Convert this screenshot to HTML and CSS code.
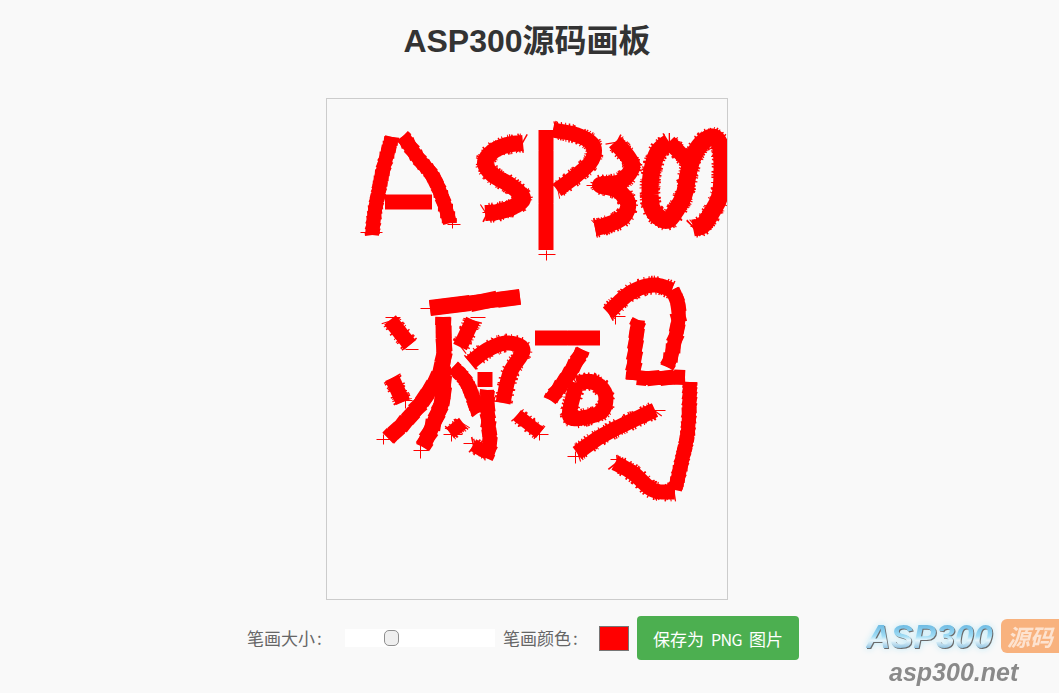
FILE: index.html
```html
<!DOCTYPE html>
<html lang="zh-CN">
<head>
<meta charset="utf-8">
<title>ASP300源码画板</title>
<link rel="stylesheet" href="styles.css">
</head>
<body>
<main class="app">
  <h1 class="title">ASP300源码画板</h1>
  <canvas id="board" class="board" width="400" height="500"></canvas>
  <div class="controls">
    <label class="label label-size" for="size">笔画大小<span class="colon">:</span></label>
    <input class="slider" id="size" type="range" min="1" max="50" value="15">
    <label class="label label-color" for="color">笔画颜色<span class="colon">:</span></label>
    <input class="swatch" id="color" type="color" value="#ff0000">
    <button class="save" type="button">保存为 <span class="save-latin">PNG</span> 图片</button>
  </div>
</main>
<div class="logo">
  <div class="logo-top">
    <span class="logo-name">ASP300</span>
    <span class="logo-badge">源码</span>
  </div>
  <div class="logo-url">asp300.net</div>
</div>
<script src="app.js"></script>
</body>
</html>
```
FILE: styles.css
```css
* { box-sizing: border-box; }
html, body { margin: 0; height: 100%; }
body {
  background: #f9f9f9;
  color: #666;
  font-family: "Liberation Sans", "Noto Sans CJK SC", sans-serif;
  overflow: hidden;
}
.app { width: 1054px; }
.title {
  margin: 22px 0 38px;
  font-size: 32px;
  line-height: 38px;
  font-weight: 700;
  color: #333;
  text-align: center;
}
.board {
  display: block;
  box-sizing: content-box;
  margin: 0 auto;
  border: 1px solid #ccc;
}
.controls {
  display: flex;
  justify-content: center;
  align-items: center;
  margin-top: 16px;
}
.label {
  width: 80px;
  font-size: 17px;
  line-height: 24px;
  color: #666;
  font-family: "Noto Sans CJK SC", sans-serif;
  white-space: nowrap;
}
.colon { margin-left: 2px; }
.label-size { margin-right: 18px; }
.label-color { margin-right: 16px; }
.slider {
  -webkit-appearance: none;
  appearance: none;
  width: 150px;
  height: 18px;
  margin: 0 8px 0 0;
  background: #fff;
  outline: none;
}
.slider::-webkit-slider-thumb {
  -webkit-appearance: none;
  width: 15px;
  height: 16px;
  border: 1px solid #8f8f8f;
  border-radius: 5px;
  background: #efefef;
}
.swatch {
  -webkit-appearance: none;
  appearance: none;
  width: 30px;
  height: 25px;
  margin: 0 8px 0 0;
  padding: 0;
  border: 1px solid #767676;
  background: #f00;
}
.swatch::-webkit-color-swatch-wrapper { padding: 0; }
.swatch::-webkit-color-swatch { border: 0; }
.save {
  width: 162px;
  height: 44px;
  margin-right: 8px;
  padding: 0;
  border: 0;
  border-radius: 4px;
  background: #4caf50;
  color: #fff;
  font-family: "Noto Sans CJK SC", sans-serif;
  font-size: 17px;
  word-spacing: 3px;
  white-space: nowrap;
}
.save-latin { font-size: 16px; letter-spacing: -.5px; }
.logo {
  position: fixed;
  right: 0;
  bottom: 0;
  width: 193px;
  height: 75px;
}
.logo-top { display: flex; align-items: center; justify-content: space-between; height: 36px; }
.logo-name {
  font: italic 700 34px/36px "Liberation Sans", sans-serif;
  background: linear-gradient(180deg, #4fa6d8 0%, #9fdcf5 50%, #e8f6fb 62%, #4f9fd0 100%);
  -webkit-background-clip: text;
  background-clip: text;
  color: transparent;
  filter: drop-shadow(1.5px 1.5px 0 #6a6a6a) drop-shadow(0 0 3px #bfeaf8);
}
.logo-badge {
  width: 58px;
  height: 34px;
  border-radius: 6px 0 0 6px;
  background: #f8b27e;
  color: #fde3d0;
  font: italic 700 23px/34px "Noto Sans CJK SC", sans-serif;
  text-align: center;
}
.logo-url {
  margin: 4px 0 0 23px;
  font: italic 700 25px/28px "Liberation Sans", sans-serif;
  color: #8a8a8a;
}
```
FILE: app.js
```js
(function () {
  var ctx = document.getElementById('board').getContext('2d');
  ctx.translate(-327, -99);
  ctx.strokeStyle = '#f00';
  ctx.lineCap = 'butt';
  var seed = 12345;
  function rnd() { seed = (seed * 16807) % 2147483647; return seed / 2147483647 - 0.5; }

  // [width, step, fray, points...]
  var strokes = [
    [15, 6, .7, 372,235, 375,210, 378,195, 383,170, 392,137],
    [15, 7, .7, 403,136, 418,158, 432,175, 442,197, 450,223],
    [15, 47, 0, 385,202, 432,202],
    [16, 2.5, 1.6, 523,143, 507,145, 492,152, 485,163, 493,175, 510,185, 523,198, 513,207, 497,212, 485,213],
    [15, 45, 0, 546,130, 546,177, 546,227, 546,250],
    [15, 3.5, 1.2, 553,130, 577,135, 593,145, 592,160, 577,175, 557,190],
    [16, 2, 1.8, 615,142, 628,157, 632,168, 620,182, 600,185, 617,190, 628,203, 623,217, 607,225, 595,228],
    [17, 2, 1.8, 669,142, 658,152, 652,170, 650,190, 652,208, 660,218, 668,220, 675,212, 684,195, 688,175, 692,160, 700,145, 712,137, 720,145, 722,170, 720,195, 712,212, 703,225, 693,228],
    [15, 2, 1.8, 669,142, 682,155, 692,165],
    [16, 44, .2, 430,308, 470,303, 520,297],
    [15, 4, 1, 390,320, 410,345],
    [15, 2.5, 1.5, 392,378, 403,402],
    [16, 12, .4, 443,317, 443,363, 428,393, 407,420, 388,438],
    [16, 11, .6, 443,367, 443,397, 435,420, 423,447],
    [15, 3, 1.3, 473,320, 460,347],
    [15, 5, .8, 453,367, 467,383, 478,413],
    [15, 4, 1.2, 470,363, 487,350, 507,343, 523,350, 510,373, 503,403],
    [15, 15, 0, 485,372, 485,387],
    [15, 9, .7, 487,390, 488,420, 490,443, 486,458],
    [13, 2, 1.5, 463,423, 450,433],
    [13, 2, 2, 473,445, 487,453],
    [13, 2.5, 1.5, 517,415, 540,433],
    [15, 33, 0, 535,338, 600,338],
    [15, 9, .6, 583,350, 567,377, 550,400],
    [15, 2, 1.8, 577,383, 573,397, 570,417, 587,417, 603,410, 605,393, 593,382, 577,383],
    [15, 4, 1, 608,313, 630,293, 653,285, 672,290],
    [15, 12, .8, 672,290, 678,303, 678,323, 672,353, 667,367],
    [15, 11, .8, 638,320, 635,350, 633,380],
    [15, 15, .6, 637,378, 660,378, 685,377],
    [15, 6, .8, 690,382, 688,430, 682,460, 675,490],
    [15, 3, 1.4, 675,492, 653,490, 633,473, 615,463],
    [15, 3.5, 1.2, 655,410, 627,423, 600,437, 577,453]
  ];
  var ticks = [
    376,439,392,439, 383,434,383,444, 413,450,428,450, 420,445,420,458, 443,434,462,434, 451,428,451,441,
    463,443,475,443, 532,434,548,434, 539,430,539,440, 567,456,585,456, 575,451,575,463,
    610,316,625,316, 615,310,615,324, 610,459,625,459, 618,455,618,466, 645,410,665,410, 652,405,652,416,
    360,232,382,232, 447,224,460,224, 452,218,452,228, 482,212,495,212, 586,185,600,185,
    546,250,546,260, 538,254,555,254, 708,128,708,142, 700,135,717,135, 690,226,704,226, 697,221,697,235,
    420,308,432,308, 470,317,485,317, 385,317,400,317, 405,349,418,349, 403,400,412,400, 405,397,405,408
  ];

  function at(p, i, t) {
    var n = p.length / 2;
    function g(k, o) { k = Math.max(0, Math.min(n - 1, k)); return p[k * 2 + o]; }
    function c(o) {
      var a = g(i - 1, o), b = g(i, o), d = g(i + 1, o), e = g(i + 2, o);
      return b + .5 * t * (d - a + t * (2 * a - 5 * b + 4 * d - e + t * (3 * (b - d) + e - a)));
    }
    return [c(0), c(1)];
  }

  strokes.forEach(function (s) {
    var p = s.slice(3), prev = [p[0], p[1]], i, j, n, q, len, ang, half, dx, dy, mx, my;
    var frayed = s[2] > .9;
    // solid core under the fray
    ctx.lineWidth = s[0] - (frayed ? 0 : 1);
    ctx.lineJoin = 'round';
    ctx.beginPath();
    ctx.moveTo(p[0], p[1]);
    for (i = 0; i < p.length / 2 - 1; i++) {
      for (j = 1; j <= 8; j++) {
        q = at(p, i, j / 8);
        ctx.lineTo(q[0], q[1]);
      }
    }
    ctx.stroke();
    // thin butt-ended slices, each turned a little, fan out at the edges
    ctx.lineWidth = s[0] + (frayed ? 4 : 0);
    for (i = 0; i < p.length / 2 - 1; i++) {
      len = Math.hypot(p[i * 2 + 2] - p[i * 2], p[i * 2 + 3] - p[i * 2 + 1]);
      n = Math.max(1, Math.ceil(len / s[1]));
      for (j = 1; j <= n; j++) {
        q = at(p, i, j / n);
        ang = Math.atan2(q[1] - prev[1], q[0] - prev[0]) + rnd() * s[2] * .9;
        half = frayed ? .45 + Math.abs(rnd()) * .8 : Math.hypot(q[0] - prev[0], q[1] - prev[1]) / 2;
        dx = Math.cos(ang) * half;
        dy = Math.sin(ang) * half;
        mx = (q[0] + prev[0]) / 2;
        my = (q[1] + prev[1]) / 2;
        ctx.beginPath();
        ctx.moveTo(mx - dx, my - dy);
        ctx.lineTo(mx + dx, my + dy);
        ctx.stroke();
        prev = q;
      }
    }
  });

  ctx.lineWidth = 1;
  ctx.beginPath();
  for (var k = 0; k < ticks.length; k += 4) {
    ctx.moveTo(ticks[k] + .5, ticks[k + 1] + .5);
    ctx.lineTo(ticks[k + 2] + .5, ticks[k + 3] + .5);
  }
  ctx.stroke();
})();
```
